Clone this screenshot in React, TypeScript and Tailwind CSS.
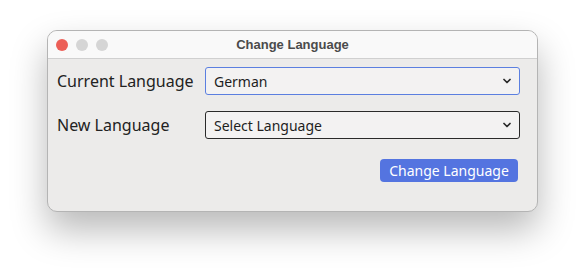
import { ChevronDown } from "lucide-react"

function FakeSelect({ value, focused }: { value: string; focused?: boolean }) {
  return (
    <div
      className={`flex h-[28px] w-[315px] items-center justify-between rounded-[3px] border bg-[#f3f2f2] pl-[8px] pr-[6px] text-[14px] text-[#1e1e1e] ${
        focused ? "border-[#5b7fe0]" : "border-[#2a2a2a]"
      }`}
    >
      <span>{value}</span>
      <ChevronDown size={12} strokeWidth={3.5} className="text-[#2a2a2a]" />
    </div>
  )
}

export default function App() {
  return (
    <div
      className="h-[279px] w-[586px] bg-white pl-[47px] pt-[30px]"
      style={{ fontFamily: '"Noto Sans", "Open Sans", sans-serif' }}
    >
      <div className="flex h-[182px] w-[491px] flex-col overflow-hidden rounded-[10px] border border-[#b4b4b4] bg-[#ecebea] shadow-[0_18px_36px_rgba(0,0,0,0.28)]">
        <div className="relative flex h-[28px] items-center justify-center border-b border-[#d0d0d0] bg-[#f9f9f9]">
          <div className="absolute left-[8px] top-[8px] flex gap-[8px]">
            <span className="size-[12px] rounded-full bg-[#ec5f57]" />
            <span className="size-[12px] rounded-full bg-[#d5d5d5]" />
            <span className="size-[12px] rounded-full bg-[#d5d5d5]" />
          </div>
          <span
            className="text-[13px] font-bold text-[#4b4b4b]"
            style={{ fontFamily: '"Liberation Sans", Arial, sans-serif' }}
          >
            Change Language
          </span>
        </div>
        <div className="flex flex-col pl-[9px] pr-[17px] pt-[8px]">
          <div className="flex items-center justify-between">
            <span className="text-[16px] text-[#222]">Current Language</span>
            <FakeSelect value="German" focused />
          </div>
          <div className="mt-[16px] flex items-center justify-between">
            <span className="text-[16px] text-[#222]">New Language</span>
            <FakeSelect value="Select Language" />
          </div>
          <div className="mt-[20px] flex justify-end pr-[2px]">
            <button className="h-[23px] w-[138px] rounded-[4px] bg-[#5474e0] text-[14px] text-white">
              Change Language
            </button>
          </div>
        </div>
      </div>
    </div>
  )
}
